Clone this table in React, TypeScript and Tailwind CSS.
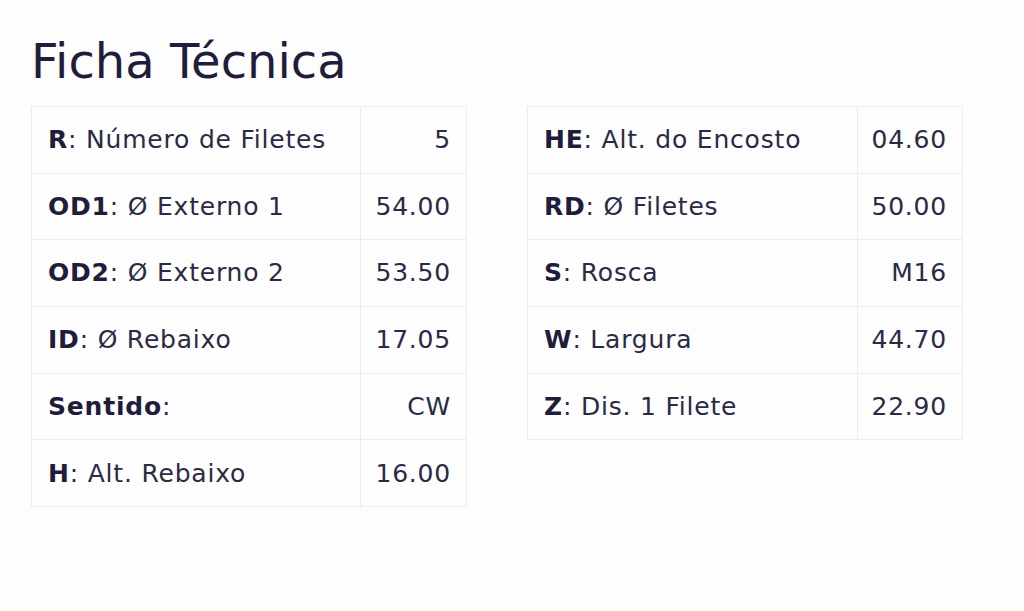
const LEFT_ROWS: [string, string, string][] = [
  ["R", "Número de Filetes", "5"],
  ["OD1", "Ø Externo 1", "54.00"],
  ["OD2", "Ø Externo 2", "53.50"],
  ["ID", "Ø Rebaixo", "17.05"],
  ["Sentido", "", "CW"],
  ["H", "Alt. Rebaixo", "16.00"],
];

const RIGHT_ROWS: [string, string, string][] = [
  ["HE", "Alt. do Encosto", "04.60"],
  ["RD", "Ø Filetes", "50.00"],
  ["S", "Rosca", "M16"],
  ["W", "Largura", "44.70"],
  ["Z", "Dis. 1 Filete", "22.90"],
];

function SpecTable({ rows, wide }: { rows: [string, string, string][]; wide?: boolean }) {
  return (
    <table className="w-[436px] table-fixed border-collapse">
      <colgroup>
        <col className={wide ? "w-[330px]" : "w-[329px]"} />
        <col />
      </colgroup>
      <tbody>
        {rows.map(([code, label, value]) => (
          <tr key={code} className="h-[66.7px]">
            <td className="whitespace-nowrap border border-[#ececef] px-4 text-left">
              <span className="font-bold text-[#1f1d3b]">{code}</span>
              {label ? `: ${label}` : ":"}
            </td>
            <td className="whitespace-nowrap border border-[#ececef] pl-2 pr-[15px] text-right">{value}</td>
          </tr>
        ))}
      </tbody>
    </table>
  );
}

export default function App() {
  return (
    <div
      className="min-h-[611px] w-[1024px] bg-[#fdfdfe] pl-[31px] pt-[30px] text-[#2b2a45]"
      style={{ fontFamily: "'DejaVu Sans', sans-serif" }}
    >
      <h1 className="mb-[14px] text-[48px] font-normal leading-[62px] text-[#1f1d3b]">
        Ficha Técnica
      </h1>
      <div className="flex items-start gap-[60px] text-[25px] tracking-[0.8px]">
        <SpecTable rows={LEFT_ROWS} />
        <SpecTable rows={RIGHT_ROWS} wide />
      </div>
    </div>
  );
}
